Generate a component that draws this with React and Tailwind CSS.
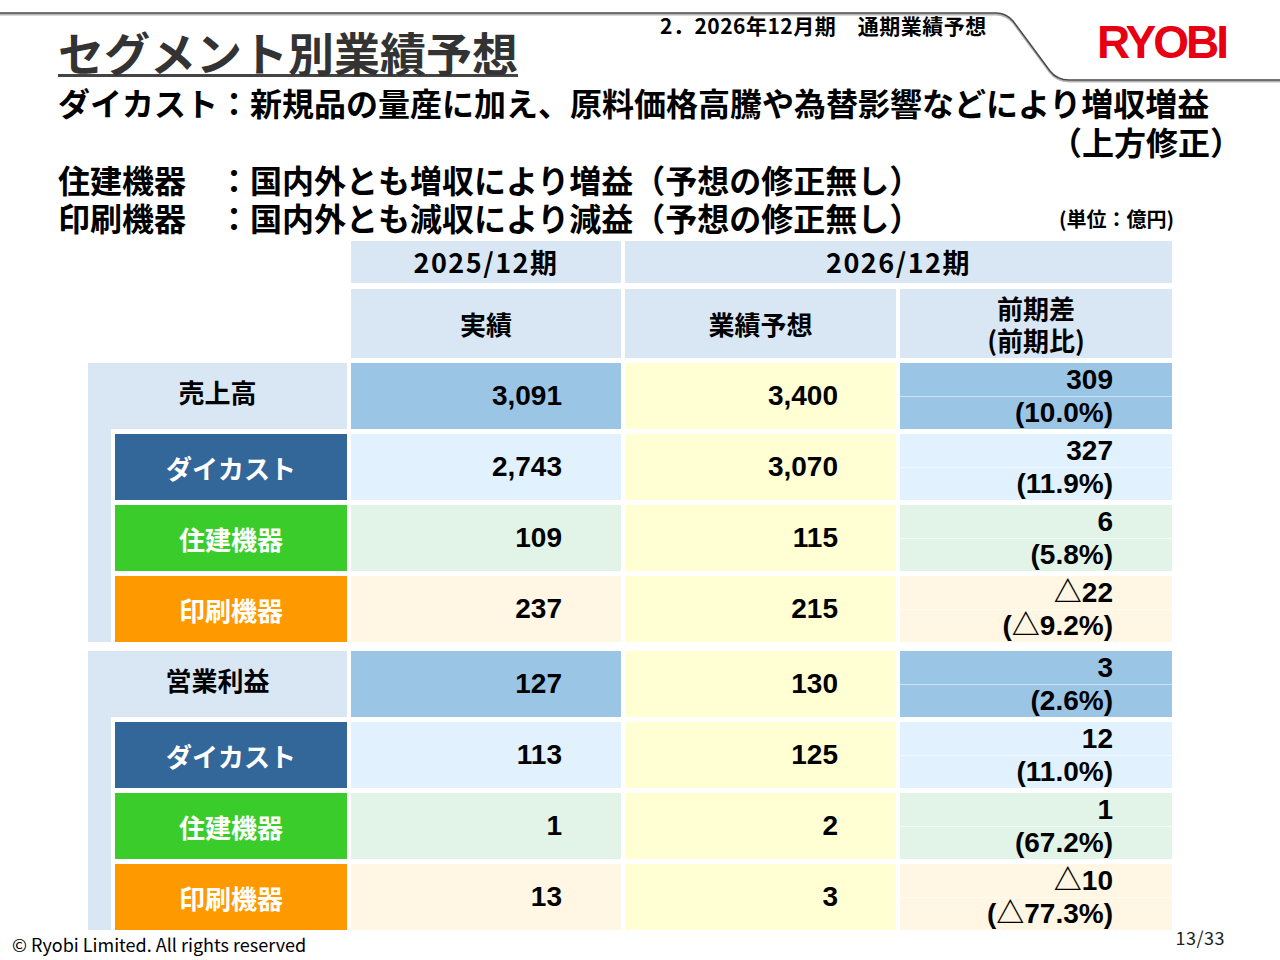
import React from 'react';

const SEG = {
  die: { label: 'bg-[#336699]', cell: 'bg-[#e1f1fd]' },
  house: { label: 'bg-[#3acc2a]', cell: 'bg-[#e2f4e8]' },
  print: { label: 'bg-[#ff9900]', cell: 'bg-[#fff6e3]' },
};

const groups = [
  {
    top: { label: '売上高', a: '3,091', b: '3,400', d: '309', p: '(10.0%)' },
    subs: [
      { seg: 'die', name: 'ダイカスト', a: '2,743', b: '3,070', d: '327', p: '(11.9%)' },
      { seg: 'house', name: '住建機器', a: '109', b: '115', d: '6', p: '(5.8%)' },
      { seg: 'print', name: '印刷機器', a: '237', b: '215', d: '△22', p: '(△9.2%)' },
    ],
  },
  {
    top: { label: '営業利益', a: '127', b: '130', d: '3', p: '(2.6%)' },
    subs: [
      { seg: 'die', name: 'ダイカスト', a: '113', b: '125', d: '12', p: '(11.0%)' },
      { seg: 'house', name: '住建機器', a: '1', b: '2', d: '1', p: '(67.2%)' },
      { seg: 'print', name: '印刷機器', a: '13', b: '3', d: '△10', p: '(△77.3%)' },
    ],
  },
];

const jp = "font-['Noto_Sans_CJK_JP',sans-serif]";
const num = "font-['Liberation_Sans','Noto_Sans_CJK_JP',sans-serif]";

// one row of the three value columns
const ValueCells = ({ row, bg }) => (
  <>
    <div className={`${bg} ${num} flex items-center justify-end pr-[59px] text-[28px] font-bold`}>{row.a}</div>
    <div className={`bg-[#ffffd3] ${num} flex items-center justify-end pr-[58px] text-[28px] font-bold`}>{row.b}</div>
    <div className={`${bg} ${num} flex flex-col text-[28px] font-bold`}>
      <div className="h-[33px] flex items-center justify-end pr-[59px]">{row.d}</div>
      <div className="h-[33px] flex items-center justify-end pr-[59px] border-t border-white/50">{row.p}</div>
    </div>
  </>
);

const Group = ({ top, subs }) => (
  <div className="flex gap-[4px]">
    <div className="w-[259px] bg-[#d9e7f5] flex flex-col">
      <div className={`h-[66px] flex items-center justify-center pb-[10px] text-[26px] font-bold text-black ${jp}`}>
        {top.label}
      </div>
      <div className="ml-[23px] bg-white pl-[4px] pt-[5px] flex flex-col gap-[5px]">
        {subs.map((s) => (
          <div
            key={s.name}
            className={`h-[66px] flex items-center justify-center text-[26px] font-bold text-white ${jp} ${SEG[s.seg].label}`}
          >
            {s.name}
          </div>
        ))}
      </div>
    </div>
    <div className="grid grid-cols-[270px_271px_272px] auto-rows-[66px] gap-x-[4px] gap-y-[5px]">
      <ValueCells row={top} bg="bg-[#9ac5e5]" />
      {subs.map((s) => (
        <ValueCells key={s.name} row={s} bg={SEG[s.seg].cell} />
      ))}
    </div>
  </div>
);

export default function App() {
  return (
    <div className="relative w-[1280px] h-[960px] bg-white overflow-hidden text-black">
      {/* header rule with the step down under the logo */}
      <svg className="absolute left-0 top-0" width="1280" height="90" viewBox="0 0 1280 90">
        <path d="M0 14.5 H996 Q1006 14.5 1013 22.5 L1050 72.5 Q1057 81.5 1069 81.5 H1280" fill="none" stroke="#b5b5b5" strokeWidth="2" />
        <path d="M0 13 H996 Q1006 13 1013 21 L1050 71 Q1057 80 1069 80 H1280" fill="none" stroke="#4a4a4a" strokeWidth="1.5" />
      </svg>

      <header className="relative flex h-[83px]">
        <div className="w-[660px] pl-[58px] pt-[28px]">
          <span className={`inline-block text-[46px] leading-[46px] font-bold text-[#333] border-b-[3px] border-[#444] ${jp}`}>
            セグメント別業績予想
          </span>
        </div>
        <div className={`w-[437px] pt-[12px] text-[21px] leading-[26px] font-bold tracking-[0.5px] ${jp}`}>
          2．2026年12月期　通期業績予想
        </div>
        <div className="pt-[19px]">
          <span className="block font-['Liberation_Sans',sans-serif] font-bold text-[46px] leading-[46px] tracking-[-3px] text-[#e60012]">
            RYOBI
          </span>
        </div>
      </header>

      <section className={`${jp} font-bold text-[32px]`}>
        <div className="h-[38px] leading-[38px] pl-[58px]">
          ダイカスト：新規品の量産に加え、原料価格高騰や為替影響などにより増収増益
        </div>
        <div className="h-[40px] leading-[40px] pr-[38px] text-right">（上方修正）</div>
        <div className="h-[37px] leading-[37px] pl-[58px]">住建機器　：国内外とも増収により増益（予想の修正無し）</div>
        <div className="h-[38px] flex items-center justify-between pl-[58px] pr-[106px]">
          <span className="leading-[38px]">印刷機器　：国内外とも減収により減益（予想の修正無し）</span>
          <span className="text-[20px] leading-[22px] mt-[4px]">(単位：億円)</span>
        </div>
      </section>

      <section className="ml-[88px] mt-[5px] flex flex-col">
        <div className={`ml-[263px] flex gap-[4px] h-[42px] text-[27px] font-bold tracking-[1.5px] ${jp}`}>
          <div className="w-[270px] bg-[#d9e7f5] flex items-center justify-center">2025/12期</div>
          <div className="w-[547px] bg-[#d9e7f5] flex items-center justify-center">2026/12期</div>
        </div>
        <div className={`ml-[263px] mt-[6px] grid grid-cols-[270px_271px_272px] gap-x-[4px] h-[69px] text-[26px] font-bold ${jp}`}>
          <div className="bg-[#d9e7f5] flex items-center justify-center">実績</div>
          <div className="bg-[#d9e7f5] flex items-center justify-center">業績予想</div>
          <div className="bg-[#d9e7f5] flex flex-col items-center justify-center leading-[32px]">
            <span>前期差</span>
            <span>(前期比)</span>
          </div>
        </div>
        <div className="mt-[5px] flex flex-col gap-[9px]">
          {groups.map((g) => (
            <Group key={g.top.label} top={g.top} subs={g.subs} />
          ))}
        </div>
      </section>

      <footer className={`flex justify-between items-start ${jp}`}>
        <div className="pl-[12px] mt-[3px] text-[18px] leading-[22px]">© Ryobi Limited. All rights reserved</div>
        <div className="pr-[55px] -mt-[2px] text-[18px] leading-[18px] tracking-[0.5px] text-[#222]">13/33</div>
      </footer>
    </div>
  );
}
